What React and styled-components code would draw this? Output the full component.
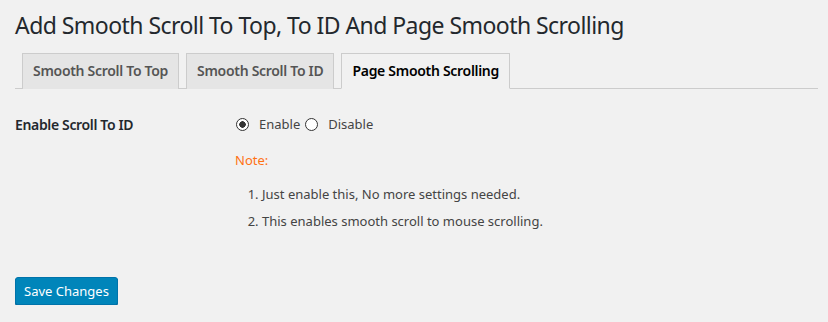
import React from 'react'
import styled, { createGlobalStyle } from 'styled-components'

const GlobalStyle = createGlobalStyle`
  body {
    margin: 0;
    background: #f1f1f1;
    color: #444;
    font-family: "Noto Sans", "Open Sans", sans-serif;
    font-size: 13px;
  }
`

const tabs = ['Smooth Scroll To Top', 'Smooth Scroll To ID', 'Page Smooth Scrolling']

export default function App () {
  return (
    <S.Wrap>
      <GlobalStyle />
      <S.Title>Add Smooth Scroll To Top, To ID And Page Smooth Scrolling</S.Title>
      <S.TabBar>
        {tabs.map((t, i) => (
          <S.Tab key={t} $active={i === 2}>{t}</S.Tab>
        ))}
      </S.TabBar>
      <S.FormRow>
        <S.Label>Enable Scroll To ID</S.Label>
        <S.Field>
          <S.Radios>
            <S.RadioLabel>
              <S.Radio $checked />
              Enable
            </S.RadioLabel>
            <S.RadioLabel>
              <S.Radio />
              Disable
            </S.RadioLabel>
          </S.Radios>
          <S.Note>Note:</S.Note>
          <S.List>
            <li>Just enable this, No more settings needed.</li>
            <li>This enables smooth scroll to mouse scrolling.</li>
          </S.List>
        </S.Field>
      </S.FormRow>
      <S.Submit>
        <S.Button>Save Changes</S.Button>
      </S.Submit>
    </S.Wrap>
  )
}

const S = {}

S.Wrap = styled.div`
  padding: 0 10px 0 15px;
`

S.Title = styled.h1`
  margin: 0;
  padding: 10px 0 4px;
  font-size: 23px;
  font-weight: 400;
  line-height: 30px;
  letter-spacing: -0.55px;
  color: #23282d;
`

S.TabBar = styled.div`
  display: flex;
  padding-top: 9px;
  border-bottom: 1px solid #ccc;
`

S.Tab = styled.div`
  margin-left: 7px;
  margin-bottom: -1px;
  padding: 5px 10px;
  border: 1px solid #ccc;
  border-bottom: ${p => (p.$active ? '1px solid #f1f1f1' : 'none')};
  background: ${p => (p.$active ? '#f1f1f1' : '#e5e5e5')};
  color: ${p => (p.$active ? '#000' : '#555')};
  font-size: 14px;
  font-weight: 600;
  line-height: 24px;
  letter-spacing: ${p => (p.$active ? '-0.3px' : '-0.3px')};
`

S.FormRow = styled.div`
  display: grid;
  grid-template-columns: 210px 1fr;
  margin-top: 7px;
`

S.Label = styled.div`
  padding: 20px 10px 20px 0;
  font-size: 14px;
  font-weight: 600;
  line-height: 18px;
  letter-spacing: -0.35px;
  color: #23282d;
`

S.Field = styled.div`
  padding: 15px 10px;
  line-height: 18px;
`

S.Radios = styled.div`
  display: flex;
  align-items: center;
  gap: 4px;
  height: 26px;
`

S.RadioLabel = styled.label`
  display: flex;
  align-items: center;
  color: #444;
`

S.Radio = styled.span`
  box-sizing: border-box;
  width: 13px;
  height: 13px;
  margin: 0 10px 0 1px;
  border: 1px solid #333;
  border-radius: 50%;
  background: ${p => (p.$checked ? 'radial-gradient(circle, #333 0 3px, #fff 3.5px)' : '#fff')};
`

S.Note = styled.p`
  margin: 14px 0 0;
  color: #ff7214;
`

S.List = styled.ol`
  margin: 16px 0 0;
  padding-left: 27px;

  li {
    margin-bottom: 9px;
  }
`

S.Submit = styled.div`
  margin-top: 23px;
`

S.Button = styled.button`
  height: 28px;
  padding: 0 8px 1px;
  border: 1px solid #0073aa;
  border-radius: 3px;
  background: #0085ba;
  box-shadow: 0 1px 0 #006799;
  color: #fff;
  font-family: inherit;
  font-size: 13px;
  line-height: 26px;
`
